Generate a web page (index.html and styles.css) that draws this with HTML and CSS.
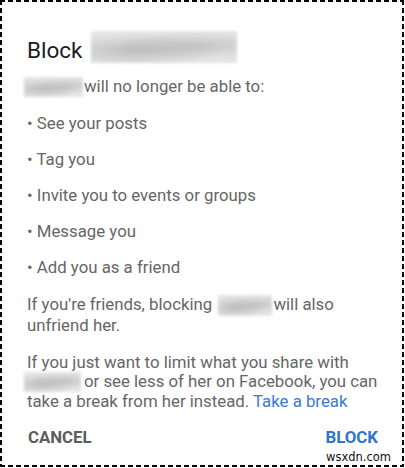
FILE: index.html
```html
<!DOCTYPE html>
<html>
<head>
<meta charset="utf-8">
<link rel="stylesheet" href="styles.css">
</head>
<body>
<div class="frame">
  <div class="dialog">
    <h1 class="title">Block<span class="blur blur-title"></span></h1>
    <p class="line lead"><span class="blur blur-lead"></span>will no longer be able to:</p>
    <p class="line item">• See your posts</p>
    <p class="line item">• Tag you</p>
    <p class="line item">• Invite you to events or groups</p>
    <p class="line item">• Message you</p>
    <p class="line item">• Add you as a friend</p>
    <p class="line para">If you're friends, blocking <span class="blur blur-mid"></span>will also<br>unfriend her.</p>
    <p class="line para">If you just want to limit what you share with<br><span class="blur blur-lead blur-l2"></span>or see less of her on Facebook, you can<br>take a break from her instead. <a class="link">Take a break</a></p>
    <div class="actions">
      <span class="btn btn-cancel">CANCEL</span>
      <span class="btn btn-block">BLOCK</span>
    </div>
  </div>
  <span class="watermark">wsxdn.com</span>
</div>
</body>
</html>
```
FILE: styles.css
```css
html, body {
  margin: 0;
  padding: 0;
  background: #fff;
}
.frame {
  position: relative;
  width: 404px;
  height: 467px;
  box-sizing: border-box;
  background:
    repeating-linear-gradient(to right, #000 0 5px, transparent 5px 8px) top left / 100% 2px no-repeat,
    repeating-linear-gradient(to right, #000 0 5px, transparent 5px 8px) bottom left / 100% 2px no-repeat,
    repeating-linear-gradient(to bottom, #000 0 5px, transparent 5px 8px) top left / 2px 100% no-repeat,
    repeating-linear-gradient(to bottom, #000 0 5px, transparent 5px 8px) top right / 2px 100% no-repeat,
    #fff;
  font-family: Roboto, "Noto Sans", sans-serif;
  overflow: hidden;
}
.dialog {
  padding: 31px 26px 0 27px;
}
.title {
  margin: 0;
  font-size: 22.5px;
  font-weight: 400;
  line-height: 26px;
  color: #1c1c1c;
  white-space: nowrap;
}
.blur {
  display: inline-block;
  background:
    radial-gradient(ellipse at 30% 60%, rgba(160,160,160,0.55), rgba(160,160,160,0) 60%),
    radial-gradient(ellipse at 75% 45%, rgba(170,170,170,0.5), rgba(170,170,170,0) 55%),
    #e4e4e4;
  filter: blur(1.5px);
}
.blur-title {
  width: 146px;
  height: 32px;
  margin-left: 8px;
  vertical-align: -5px;
}
.line {
  margin: 0;
  font-size: 16.8px;
  line-height: 19px;
  color: #666;
  white-space: nowrap;
}
.blur-lead {
  width: 59px;
  height: 20px;
  margin-left: -3px;
  margin-right: 1px;
  vertical-align: top;
}
.blur-mid {
  width: 54px;
  height: 21px;
  margin-left: 2px;
  margin-right: 1px;
  vertical-align: top;
}
.blur-l2 {
  width: 57px;
  margin-right: 3px;
}
.lead {
  margin-top: 14px;
}
.item {
  margin-top: 17px;
}
.para {
  margin-top: 18px;
}
.link {
  color: #3a7ad4;
}
.actions {
  display: flex;
  justify-content: space-between;
  margin-top: 17px;
  padding-left: 1px;
}
.btn {
  font-size: 16.8px;
  font-weight: 700;
  line-height: 19px;
}
.btn-cancel {
  color: #5c5c5c;
}
.btn-block {
  color: #2f74d0;
}
.watermark {
  position: absolute;
  right: 11px;
  bottom: 2px;
  font-family: "DejaVu Sans", sans-serif;
  font-size: 11.5px;
  color: #111;
  background: #fff;
  padding: 1px 2px;
}
```
